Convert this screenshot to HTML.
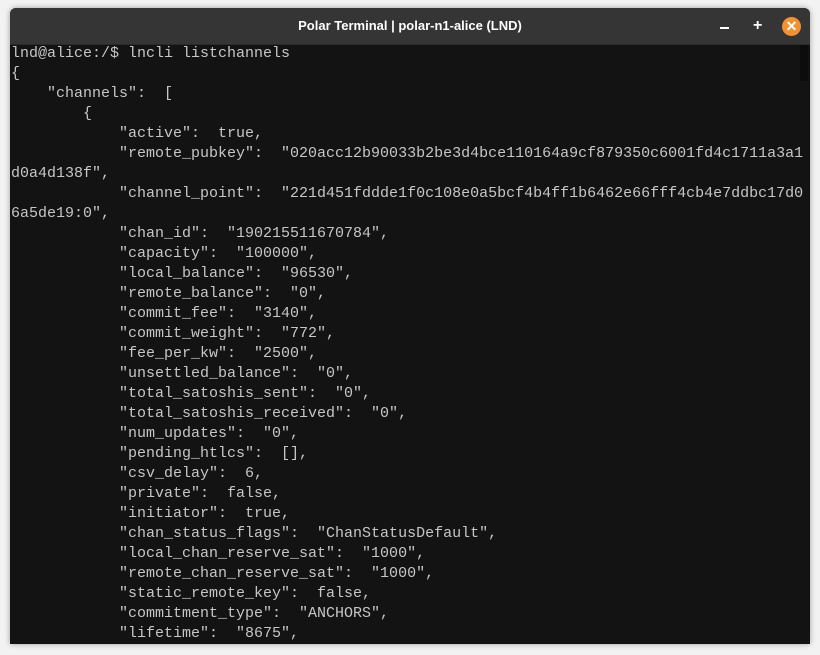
<!DOCTYPE html>
<html><head><style>
html,body{margin:0;padding:0;width:820px;height:655px;background:#f2f2f2;overflow:hidden}
.win{position:absolute;left:10px;top:8px;width:800px;height:636px;background:#131313;border-radius:6px 6px 0 0;box-shadow:0 0 6px rgba(0,0,0,.35);overflow:hidden}
.tb{height:36px;background:#353535;border-bottom:1px solid #2a2a2a;position:relative}
.title{position:absolute;left:0;right:0;top:10px;text-align:center;color:#fff;font:bold 13px "Liberation Sans",sans-serif}
.min{position:absolute;left:710px;top:19px;width:9px;height:2px;background:#fff}
.plus{position:absolute;left:743px;top:10px;color:#fff;font:bold 16px "Liberation Sans",sans-serif;line-height:16px}
.close{position:absolute;left:772px;top:9px;width:19px;height:19px;border-radius:50%;background:#f39130;color:#fff;text-align:center;font:bold 14px "Liberation Sans",sans-serif;line-height:19px}
pre{margin:0;position:absolute;left:1px;top:36px;color:#c6c6c6;font:15px/20px "Liberation Mono",monospace;letter-spacing:0}
.sb{position:absolute;right:2px;top:37px;width:8px;height:36px;background:#0c0c0c}
</style></head><body>
<div class="win">
<div class="tb"><div class="title">Polar Terminal | polar-n1-alice (LND)</div>
<div class="min"></div><div class="plus">+</div><div class="close">✕</div></div>
<div class="sb"></div>
<pre>lnd@alice:/$ lncli listchannels
{
    "channels":  [
        {
            "active":  true,
            "remote_pubkey":  "020acc12b90033b2be3d4bce110164a9cf879350c6001fd4c1711a3a1
d0a4d138f",
            "channel_point":  "221d451fddde1f0c108e0a5bcf4b4ff1b6462e66fff4cb4e7ddbc17d0
6a5de19:0",
            "chan_id":  "190215511670784",
            "capacity":  "100000",
            "local_balance":  "96530",
            "remote_balance":  "0",
            "commit_fee":  "3140",
            "commit_weight":  "772",
            "fee_per_kw":  "2500",
            "unsettled_balance":  "0",
            "total_satoshis_sent":  "0",
            "total_satoshis_received":  "0",
            "num_updates":  "0",
            "pending_htlcs":  [],
            "csv_delay":  6,
            "private":  false,
            "initiator":  true,
            "chan_status_flags":  "ChanStatusDefault",
            "local_chan_reserve_sat":  "1000",
            "remote_chan_reserve_sat":  "1000",
            "static_remote_key":  false,
            "commitment_type":  "ANCHORS",
            "lifetime":  "8675",</pre>
</div>
</body></html>
